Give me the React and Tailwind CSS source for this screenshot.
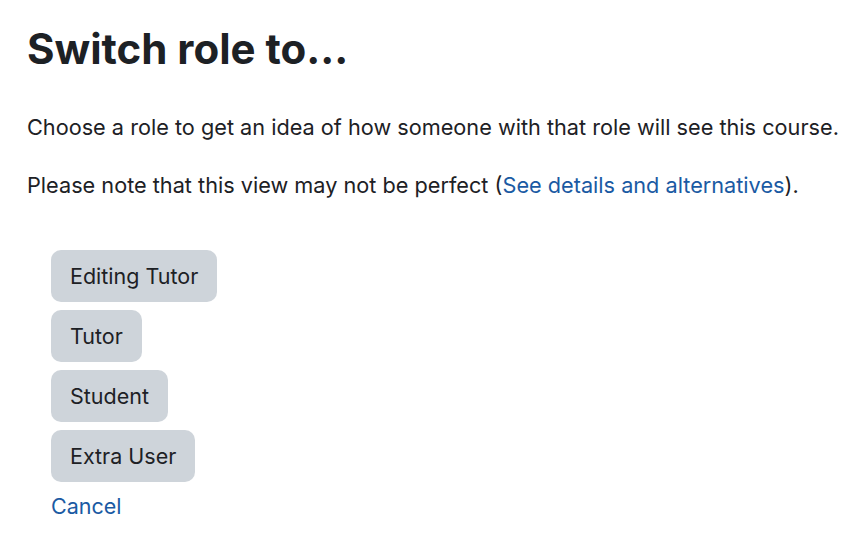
export default function App() {
  const roles = ["Editing Tutor", "Tutor", "Student", "Extra User"];

  return (
    <div className="min-h-screen bg-white pl-[27px] pr-[8px] pt-[24px] text-[#1d2125] [font-family:Inter,'Noto_Sans',sans-serif]">
      <h2 className="text-[42px] font-bold leading-[1.2]">Switch role to...</h2>
      <p className="mt-[37px] whitespace-nowrap text-[21.7px] leading-[32px]">
        Choose a role to get an idea of how someone with that role will see this course.
      </p>
      <p className="mt-[26px] whitespace-nowrap text-[21.7px] leading-[32px]">
        Please note that this view may not be perfect (
        <a href="#" className="text-[#1a5aa3]">See details and alternatives</a>
        ).
      </p>
      <div className="mt-[49px] flex flex-col items-start gap-2 pl-[24px]">
        {roles.map((role) => (
          <button
            key={role}
            type="button"
            className="h-[52px] rounded-[10px] bg-[#ced4da] px-[19px] text-[21.5px] text-[#1d2125]"
          >
            {role}
          </button>
        ))}
        <a href="#" className="text-[21.5px] leading-[32px] text-[#1a5aa3]">Cancel</a>
      </div>
    </div>
  );
}
